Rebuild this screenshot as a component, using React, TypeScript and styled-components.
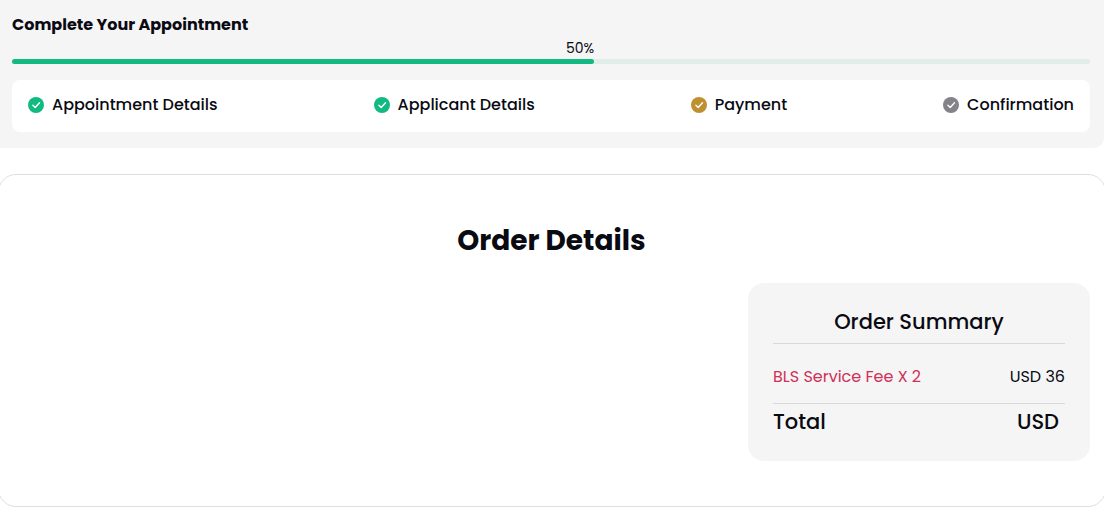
import React from "react";
import styled, { createGlobalStyle } from "styled-components";

const GlobalStyle = createGlobalStyle`
  *, *::before, *::after { box-sizing: border-box; }
  body {
    margin: 0;
    background: #ffffff;
    color: #0a0a12;
    font-family: Poppins, Inter, "Liberation Sans", sans-serif;
    font-size: 16px;
    line-height: 24px;
  }
  h1, h2, h3, p, ol, dl, dt, dd { margin: 0; padding: 0; }
`;

const Page = styled.main`
  overflow: hidden;
`;

const ProgressPanel = styled.header`
  padding: 13px 14px 16px 12px;
  background: #f5f5f5;
  border-radius: 0 0 10px 0;
`;

const PanelTitle = styled.h1`
  font-size: 16px;
  font-weight: 700;
  line-height: 24px;
`;

const ProgressLabel = styled.p`
  text-align: right;
  font-size: 14px;
  line-height: 22px;
`;

const Track = styled.div`
  height: 5px;
  border-radius: 3px;
  background: #dfeee8;
`;

const Fill = styled.div`
  height: 100%;
  border-radius: 3px;
  background: #12b981;
`;

const Steps = styled.ol`
  display: flex;
  justify-content: space-between;
  margin-top: 16px;
  padding: 13px 16px 15px;
  border-radius: 8px;
  background: #ffffff;
  list-style: none;
`;

const Step = styled.li`
  display: flex;
  align-items: center;
  gap: 8px;
  font-size: 16px;
  font-weight: 500;
  line-height: 24px;
`;

const Icon = styled.svg<{ $color: string }>`
  flex: none;
  width: 16px;
  height: 16px;
  color: ${({ $color }) => $color};
`;

const OrderCard = styled.section`
  margin: 26px -2px 0;
  padding: 46px 15px 45px 14px;
  border: 1px solid #dedede;
  border-radius: 18px;
`;

const OrderTitle = styled.h2`
  text-align: center;
  font-size: 28px;
  font-weight: 700;
  line-height: 40px;
`;

const Summary = styled.section`
  width: 342px;
  max-width: 100%;
  margin: 22px 0 0 auto;
  padding: 22px 25px 23px;
  border-radius: 16px;
  background: #f5f5f5;
`;

const SummaryTitle = styled.h3`
  padding-bottom: 5px;
  border-bottom: 1px solid #d9d9d9;
  text-align: center;
  font-size: 21px;
  font-weight: 500;
  line-height: 33px;
`;

const Row = styled.div`
  display: flex;
  justify-content: space-between;
`;

const FeeRow = styled(Row)`
  padding: 21px 0 14px;
  border-bottom: 1px solid #d9d9d9;

  dt { color: #ce3159; }
`;

const TotalRow = styled(Row)`
  padding: 2px 6px 0 0;
  font-size: 21px;
  font-weight: 500;
  line-height: 32px;
`;

const steps = [
  { label: "Appointment Details", color: "#12b981" },
  { label: "Applicant Details", color: "#12b981" },
  { label: "Payment", color: "#bf902f" },
  { label: "Confirmation", color: "#838388" },
];

function CheckCircle({ color }: { color: string }) {
  return (
    <Icon $color={color} viewBox="0 0 16 16" aria-hidden="true">
      <circle cx="8" cy="8" r="8" fill="currentColor" />
      <path
        d="M4.9 8.2 7.2 10.4 11.5 5.8"
        fill="none"
        stroke="#ffffff"
        strokeWidth="1.4"
        strokeLinecap="round"
        strokeLinejoin="round"
      />
    </Icon>
  );
}

function Progress({ value, width }: { value: number; width: number }) {
  return (
    <div>
      <ProgressLabel style={{ width: `${width}%` }}>{value}%</ProgressLabel>
      <Track role="progressbar" aria-label="Appointment progress" aria-valuenow={value}>
        <Fill style={{ width: `${width}%` }} />
      </Track>
    </div>
  );
}

export default function App() {
  return (
    <>
      <GlobalStyle />
      <Page>
        <ProgressPanel>
          <PanelTitle>Complete Your Appointment</PanelTitle>
          <Progress value={50} width={54} />
          <Steps>
            {steps.map(({ label, color }) => (
              <Step key={label}>
                <CheckCircle color={color} />
                {label}
              </Step>
            ))}
          </Steps>
        </ProgressPanel>
        <OrderCard>
          <OrderTitle>Order Details</OrderTitle>
          <Summary>
            <SummaryTitle>Order Summary</SummaryTitle>
            <dl>
              <FeeRow>
                <dt>BLS Service Fee X 2</dt>
                <dd>USD 36</dd>
              </FeeRow>
              <TotalRow>
                <dt>Total</dt>
                <dd>USD</dd>
              </TotalRow>
            </dl>
          </Summary>
        </OrderCard>
      </Page>
    </>
  );
}
